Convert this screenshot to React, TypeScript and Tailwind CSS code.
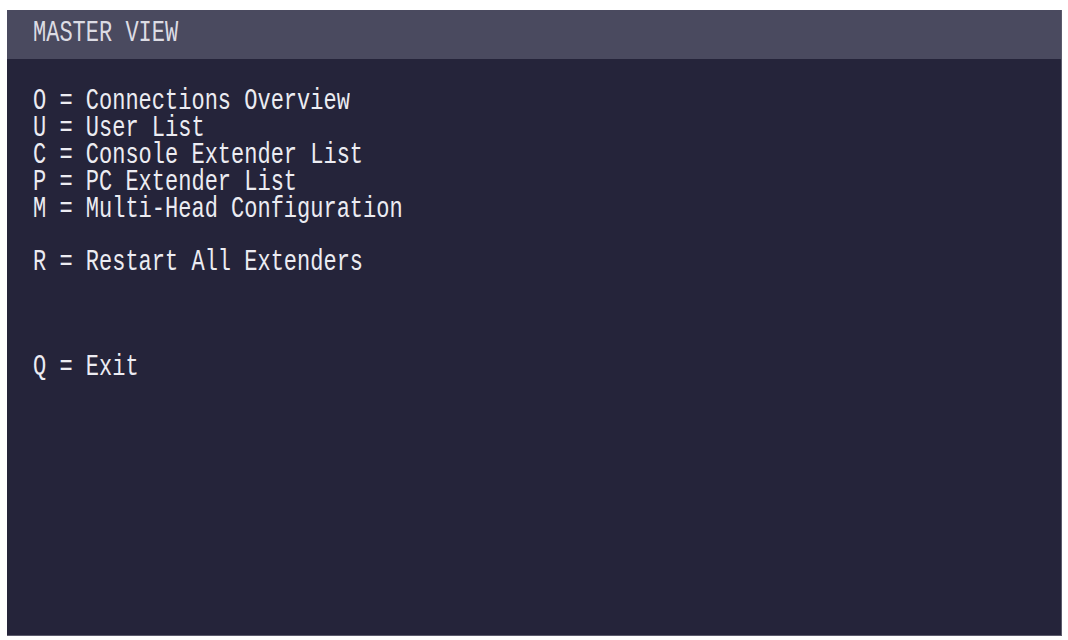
const menu = [
  { key: 'O', label: 'Connections Overview' },
  { key: 'U', label: 'User List' },
  { key: 'C', label: 'Console Extender List' },
  { key: 'P', label: 'PC Extender List' },
  { key: 'M', label: 'Multi-Head Configuration' },
];

const MenuLine = ({ k, label }: { k: string; label: string }) => (
  <div className="scale-y-[1.38] whitespace-pre">
    {k} = {label}
  </div>
);

export default function App() {
  return (
    <div className="h-[640px] w-[1068px] bg-white pl-[7px] pt-[10px]">
      <div
        className="flex h-[626px] w-[1055px] flex-col bg-[#25243a] border-r border-b border-[#5c5b6c] text-[22px] leading-[27px] text-[#ececf2]"
        style={{ fontFamily: '"Liberation Mono", "DejaVu Sans Mono", monospace' }}
      >
        {/* title bar */}
        <div className="flex h-[49px] items-center bg-[#4a4a5f] px-[26px] pb-[3px] text-[#dcdce4]">
          <div className="scale-y-[1.38]">MASTER VIEW</div>
        </div>

        {/* menu */}
        <div className="flex flex-col px-[26px] pt-[29px]">
          {menu.map((m) => (
            <MenuLine key={m.key} k={m.key} label={m.label} />
          ))}
          <div className="mt-[26px]">
            <MenuLine k="R" label="Restart All Extenders" />
          </div>
          <div className="mt-[78px]">
            <MenuLine k="Q" label="Exit" />
          </div>
        </div>
      </div>
    </div>
  );
}
